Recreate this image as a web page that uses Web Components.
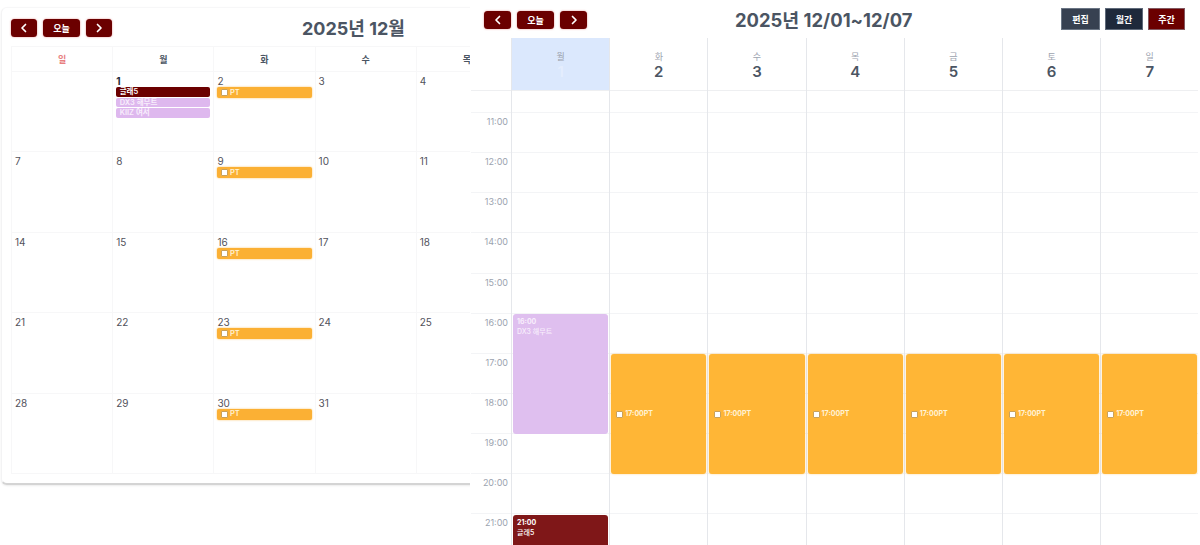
<!DOCTYPE html>
<html lang="ko"><head><meta charset="utf-8"><title>Calendar</title>
<style>
html,body{margin:0;padding:0;background:#fff;height:545px;overflow:hidden}
body{font-family:Inter,"Noto Sans CJK KR","Noto Sans",sans-serif}
</style></head><body>
<cal-app>
  <month-view></month-view>
  <week-view></week-view>
</cal-app>
<script>
const chev = d => `<svg width="10" height="10" viewBox="0 0 10 10" fill="none" stroke="#fff" stroke-width="1.7" stroke-linecap="round" stroke-linejoin="round"><path d="${d==='l'?'M6.5 1.5 3 5l3.5 3.5':'M3.5 1.5 7 5 3.5 8.5'}"/></svg>`;
class NavBtn extends HTMLElement{
  constructor(){super();this.attachShadow({mode:'open'}).innerHTML=`<style>
  :host{display:flex;align-items:center;justify-content:center;height:18px;box-sizing:border-box;background:#6b0000;color:#fff;border-radius:3.5px;box-shadow:0 0 2px rgba(200,40,40,.55);font-size:9px;font-weight:600;line-height:1}
  </style><slot></slot>`;}
  connectedCallback(){const w=this.getAttribute('w');if(w)this.style.width=w+'px';const d=this.getAttribute('dir');if(d)this.shadowRoot.innerHTML+=chev(d);}
}
customElements.define('nav-btn',NavBtn);
class ViewBtn extends HTMLElement{
  constructor(){super();this.attachShadow({mode:'open'}).innerHTML=`<style>
  :host{display:flex;align-items:center;justify-content:center;height:22px;box-sizing:border-box;color:#fff;border:1px solid rgba(150,160,175,.55);font-size:9px;font-weight:600;background:var(--bg,#374151)}
  </style><slot></slot>`;}
}
customElements.define('view-btn',ViewBtn);
class MonthEvent extends HTMLElement{
  constructor(){super();this.attachShadow({mode:'open'}).innerHTML=`<style>
  :host{display:flex;align-items:center;gap:1.5px;height:9.5px;box-sizing:border-box;padding:0 3.5px;border-radius:2px;color:var(--fg,#fff);font-size:7.5px;font-weight:600;line-height:1;background:var(--bg);white-space:nowrap;overflow:hidden}
  i{width:7px;height:7px;background:#fff;border:.5px solid #c9a15a;box-sizing:border-box;border-radius:1px}
  :host([pt]){height:11px;padding-left:4px;box-shadow:0 0 2px rgba(251,176,52,.8)}
  </style><slot></slot>`;
  }
  connectedCallback(){if(this.hasAttribute('pt'))this.shadowRoot.querySelector('slot').insertAdjacentHTML('beforebegin','<i></i>');}
}
customElements.define('month-event',MonthEvent);
class MonthDay extends HTMLElement{
  constructor(){super();this.attachShadow({mode:'open'}).innerHTML=`<style>
  :host{display:block;box-sizing:border-box;padding:3px 3px 0;border-right:1px solid #f7f7f8;border-bottom:1px solid #f7f7f8;min-width:0;overflow:hidden}
  .n{display:block;font-size:10px;line-height:13px;height:12px;color:#52525b}
  :host([strong]) .n{color:#1f2937;font-weight:700}
  .ev{display:flex;flex-direction:column;gap:1px}
  </style><span class="n"></span><div class="ev"><slot></slot></div>`;}
  connectedCallback(){this.shadowRoot.querySelector('.n').textContent=this.getAttribute('n')||'';}
}
customElements.define('month-day',MonthDay);
class MonthView extends HTMLElement{
  constructor(){super();
    const wd=['일','월','화','수','목'];
    const rows=[['',1,2,3,4],[7,8,9,10,11],[14,15,16,17,18],[21,22,23,24,25],[28,29,30,31,'']];
    const cell=n=>{
      let ev='';
      if(n===1)ev=`<month-event style="--bg:#6b0000">글래5</month-event><month-event style="--bg:#deb8ee;--fg:#f8eefc">DX3 해무트</month-event><month-event style="--bg:#deb8ee;--fg:#f8eefc">KIIZ 여서</month-event>`;
      if([2,9,16,23,30].includes(n))ev=`<month-event pt style="--bg:#fbb034;--fg:#fff3d6">PT</month-event>`;
      return `<month-day n="${n}" ${n===1?'strong':''}>${ev}</month-day>`;
    };
    this.attachShadow({mode:'open'}).innerHTML=`<style>
    :host{display:block;width:470px;height:545px;overflow:hidden;flex:none}
    .card{width:740px;height:478px;margin:7px 0 0 1px;box-sizing:border-box;padding:11px 9px 0;background:#fff;border-radius:6px;border-top:1px solid #f7f7f8;border-left:1px solid #f3f3f4;border-bottom:2px solid #d4d4d4;box-shadow:0 1px 2px rgba(0,0,0,.08)}
    .bar{display:flex;align-items:center;height:18px;gap:6px}
    h1{margin:2px 0 0 184px;font-size:18px;font-weight:700;color:#4b5563;line-height:18px;white-space:nowrap}
    .grid{display:grid;grid-template-columns:repeat(5,101.2px);grid-template-rows:25px repeat(5,80.4px);margin-top:9px;border-top:1px solid #f7f7f8;border-left:1px solid #f7f7f8}
    .wd{display:flex;align-items:center;justify-content:center;font-size:9px;font-weight:600;color:#4b5563;border-right:1px solid #f7f7f8;border-bottom:1px solid #f7f7f8}
    .wd.sun{color:#e88080}
    </style>
    <div class="card">
      <div class="bar"><nav-btn w="26" dir="l"></nav-btn><nav-btn w="37">오늘</nav-btn><nav-btn w="26" dir="r"></nav-btn><h1>2025년 12월</h1></div>
      <div class="grid">${wd.map((w,i)=>`<div class="wd ${i?'':'sun'}">${w}</div>`).join('')}${rows.flat().map(cell).join('')}</div>
    </div>`;
  }
}
customElements.define('month-view',MonthView);
class WeekEvent extends HTMLElement{
  constructor(){super();this.attachShadow({mode:'open'}).innerHTML=`<style>
  :host{position:absolute;left:1px;right:1px;box-sizing:border-box;border-radius:3px;padding:3px 4px;color:var(--fg,#fff);font-size:7px;line-height:10px;font-weight:500;background:var(--bg);display:flex;flex-direction:column}
  :host([center]){flex-direction:row;align-items:center;gap:2px;padding:0 5px 0 5px;box-shadow:0 0 2px rgba(255,182,54,.6);font-weight:700}
  i{width:7px;height:7px;background:#fff;border:.5px solid #c9a15a;box-sizing:border-box;border-radius:1px;flex:none}
  </style><slot></slot>`;}
  connectedCallback(){const s=+this.getAttribute('start'),d=+this.getAttribute('dur');
    this.style.top=`calc(${s} * var(--h) + .5px)`;this.style.height=`calc(${d} * var(--h) - .5px)`;
    if(this.hasAttribute('center'))this.shadowRoot.querySelector('slot').insertAdjacentHTML('beforebegin','<i></i>');}
}
customElements.define('week-event',WeekEvent);
class DayCol extends HTMLElement{
  constructor(){super();this.attachShadow({mode:'open'}).innerHTML=`<style>
  :host{display:flex;flex-direction:column;--h:40.15px;border-left:1px solid #e5e7eb;box-sizing:border-box;min-width:0}
  .head{height:53px;box-sizing:border-box;border-bottom:1px solid #eeeff1;display:flex;flex-direction:column;align-items:center;padding-top:13px}
  .w{font-size:9px;line-height:12px;color:#9ca3af}
  .d{font-size:15px;line-height:18px;font-weight:600;color:#4b5563}
  :host([today]) .head{background:#dbe8fd}
  :host([today]) .d{color:#e4edfd}
  .all{height:22px;box-sizing:border-box;border-bottom:1px solid #f3f4f6}
  .slots{position:relative;flex:1}
  .s{height:var(--h);box-sizing:border-box;border-bottom:1px solid #f3f4f6}
  </style><div class="head"><span class="w"></span><span class="d"></span></div><div class="all"></div>
  <div class="slots">${'<div class="s"></div>'.repeat(11)}<slot></slot></div>`;}
  connectedCallback(){this.shadowRoot.querySelector('.w').textContent=this.getAttribute('w');this.shadowRoot.querySelector('.d').textContent=this.getAttribute('d');}
}
customElements.define('day-col',DayCol);
class WeekView extends HTMLElement{
  constructor(){super();
    const hours=[11,12,13,14,15,16,17,18,19,20,21];
    const days=[['화',2],['수',3],['목',4],['금',5],['토',6],['일',7]];
    this.attachShadow({mode:'open'}).innerHTML=`<style>
    :host{display:flex;flex-direction:column;width:730px;height:545px;overflow:hidden;flex:none}
    .bar{display:flex;align-items:center;height:38px;padding:2px 15px 0 14px;box-sizing:border-box;gap:6px}
    h1{margin:0 0 0 142px;font-size:18.4px;font-weight:700;color:#4b5563;line-height:20px;white-space:nowrap;flex:1}
    .views{display:flex;gap:5px;margin-top:-2px}
    .grid{display:grid;grid-template-columns:40px repeat(7,98.2px);flex:1;margin-left:1px;min-height:0}
    .times{display:flex;flex-direction:column}
    .sp{height:53px;box-sizing:border-box;border-bottom:1px solid #eeeff1;flex:none}
    .sp2{height:22px;box-sizing:border-box;border-bottom:1px solid #f3f4f6;flex:none}
    .t{height:40.15px;box-sizing:border-box;border-bottom:1px solid #f3f4f6;text-align:right;padding:3px 3px 0 0;font-size:9px;line-height:12px;color:#9ca3af;flex:none}
    </style>
    <div class="bar"><nav-btn w="27" dir="l"></nav-btn><nav-btn w="37">오늘</nav-btn><nav-btn w="27" dir="r"></nav-btn>
      <h1>2025년 12/01~12/07</h1>
      <div class="views"><view-btn style="width:39px;--bg:#374151">편집</view-btn><view-btn style="width:38px;--bg:#1e293b">월간</view-btn><view-btn style="width:37px;--bg:#6b0000">주간</view-btn></div></div>
    <div class="grid">
      <div class="times"><div class="sp"></div><div class="sp2"></div>${hours.map(h=>`<div class="t">${h}:00</div>`).join('')}</div>
      <day-col today w="월" d="1">
        <week-event start="5" dur="3" style="--bg:#dfbfef;--fg:#f8eefc"><b>16:00</b><span>DX3 해무트</span></week-event>
        <week-event start="10" dur="2" style="--bg:#7f1718"><b>21:00</b><span>글래5</span></week-event>
      </day-col>
      ${days.map(([w,d])=>`<day-col w="${w}" d="${d}"><week-event center start="6" dur="3" style="--bg:#ffb636;--fg:#fff3d6">17:00PT</week-event></day-col>`).join('')}
    </div>`;
  }
}
customElements.define('week-view',WeekView);
class CalApp extends HTMLElement{
  constructor(){super();this.attachShadow({mode:'open'}).innerHTML=`<style>:host{display:flex;width:1200px;height:545px;overflow:hidden}</style><slot></slot>`;}
}
customElements.define('cal-app',CalApp);
</script>
</body></html>
